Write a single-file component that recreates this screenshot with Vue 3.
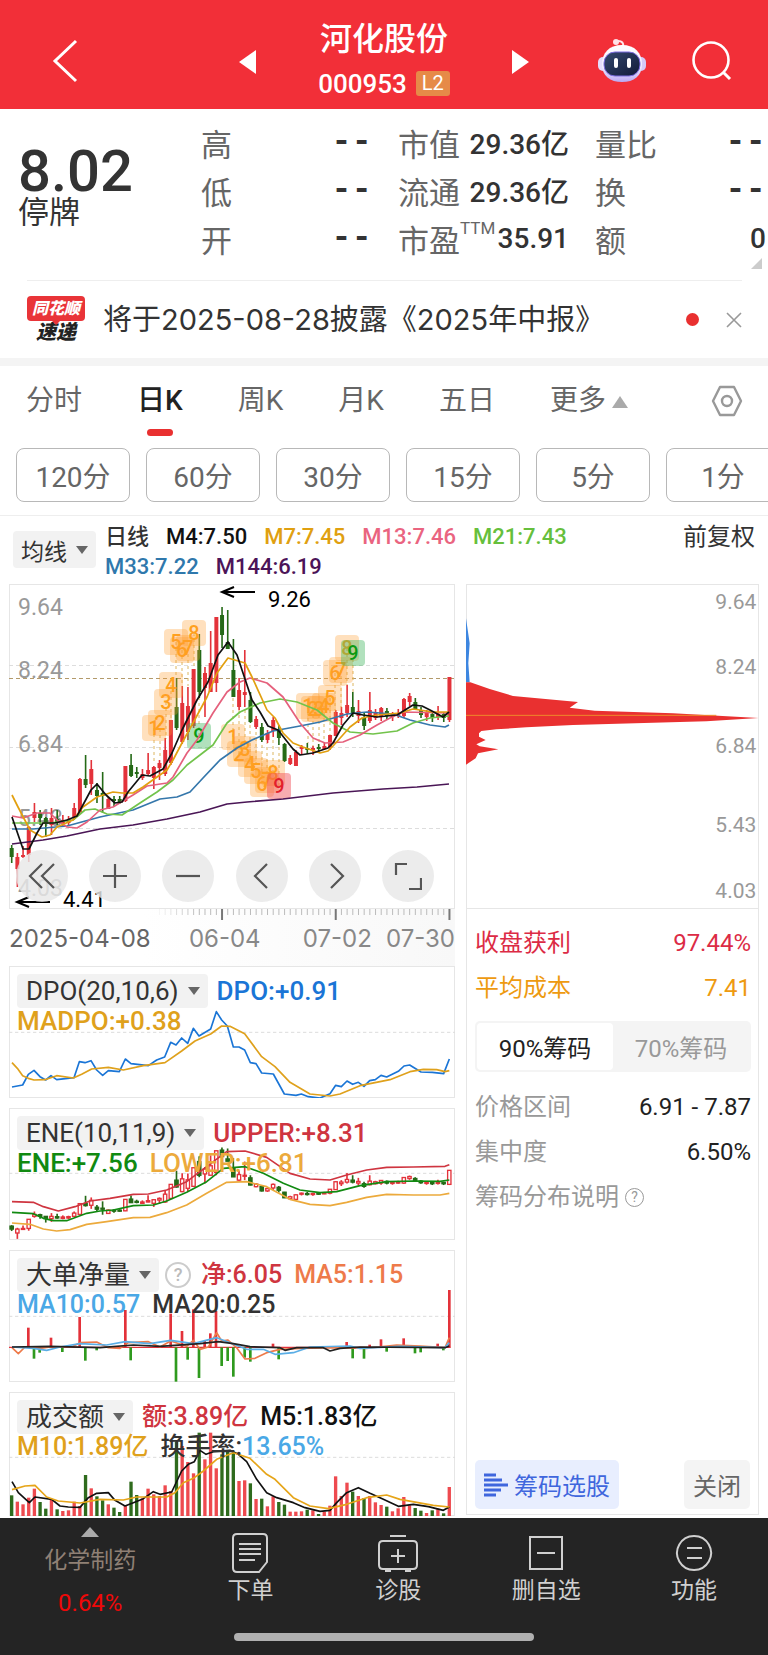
<template>
  <div class="page">
    <header class="topbar">
      <button class="icon-btn back" aria-label="返回">
        <svg width="26" height="44" viewBox="0 0 26 44"><path d="M24 2 3 22l21 20" fill="none" stroke="#fff" stroke-width="3" /></svg>
      </button>
      <div class="switcher">
        <button class="icon-btn" aria-label="上一只">
          <svg width="17" height="24" viewBox="0 0 17 24"><path d="M17 0v24L0 12z" fill="#fff" /></svg>
        </button>
        <div class="stock">
          <h1>河化股份</h1>
          <div class="code">000953<span class="level">L2</span></div>
        </div>
        <button class="icon-btn" aria-label="下一只">
          <svg width="17" height="24" viewBox="0 0 17 24"><path d="M0 0v24l17-12z" fill="#fff" /></svg>
        </button>
      </div>
      <div class="top-actions">
        <button class="icon-btn" aria-label="助手">
          <svg width="48" height="46" viewBox="0 0 48 46">
            <defs>
              <linearGradient id="shell" x1="0" y1="0" x2="0" y2="1">
                <stop offset="0" stop-color="#fff" />
                <stop offset=".6" stop-color="#f1ecff" />
                <stop offset="1" stop-color="#b9a8f2" />
              </linearGradient>
              <linearGradient id="visor" x1="0" y1="0" x2="1" y2="1">
                <stop offset="0" stop-color="#34486e" />
                <stop offset="1" stop-color="#121a38" />
              </linearGradient>
            </defs>
            <path d="M25 9c1-4-1-6-5-6" fill="none" stroke="#ffe6ea" stroke-width="2" />
            <circle cx="18" cy="4" r="3" fill="#ffe0e6" />
            <rect x="0" y="19" width="10" height="14" rx="5" fill="#e4dcfb" />
            <rect x="38" y="19" width="10" height="14" rx="5" fill="#d5caf8" />
            <path d="M24 7c13 0 20 8 20 19 0 12-8 18-20 18S4 38 4 26C4 15 11 7 24 7z" fill="url(#shell)" />
            <rect x="6" y="14" width="36" height="24" rx="11" fill="url(#visor)" stroke="#7b6ce0" />
            <rect x="16" y="20" width="4" height="10" rx="2" fill="#fff" />
            <rect x="29" y="20" width="4" height="10" rx="2" fill="#fff" />
          </svg>
        </button>
        <button class="icon-btn" aria-label="搜索">
          <svg width="40" height="40" viewBox="0 0 40 40"><circle cx="19" cy="19" r="17.5" fill="none" stroke="#fff" stroke-width="2.6" /><path d="m31 31 7 7" stroke="#fff" stroke-width="3" /></svg>
        </button>
      </div>
    </header>

    <section class="quote">
      <div class="price">
        <strong>8.02</strong>
        <span>停牌</span>
      </div>
      <dl v-for="(col, i) in quotes" :key="i">
        <div v-for="q in col" :key="q.label">
          <dt>{{ q.label }}<sup v-if="q.sup">{{ q.sup }}</sup></dt>
          <dd :class="{ dash: q.value === '--' }">{{ q.value }}</dd>
        </div>
      </dl>
      <span class="corner"></span>
    </section>

    <section class="notice">
      <div class="logo"><span class="bubble">同花顺</span><span class="logo-sub">速递</span></div>
      <a href="#">将于2025-08-28披露《2025年中报》</a>
      <span class="dot"></span>
      <button class="icon-btn" aria-label="关闭提醒">
        <svg width="16" height="18" viewBox="0 0 16 18"><path d="m1 2 14 14M15 2 1 16" stroke="#999" stroke-width="1.6" /></svg>
      </button>
    </section>

    <nav class="tabs">
      <button v-for="t in tabs" :key="t" :class="{ active: t === tab }" @click="tab = t">{{ t }}</button>
      <button class="more">更多<i class="tri-up"></i></button>
      <button class="icon-btn setting" aria-label="设置">
        <svg width="32" height="32" viewBox="0 0 32 32" fill="none" stroke="#999" stroke-width="2.4"><path d="M9 2h14l7 14-7 14H9L2 16z" stroke-linejoin="round" /><circle cx="16" cy="16" r="5" /></svg>
      </button>
    </nav>

    <div class="periods">
      <button v-for="p in periods" :key="p">{{ p }}</button>
    </div>

    <section class="averages">
      <button class="chip">均线<i class="caret"></i></button>
      <p>
        <span v-for="m in averages" :key="m.text" :style="{ color: m.color }">{{ m.text }}</span>
      </p>
      <button class="adjust">前复权</button>
    </section>

    <main class="board">
      <div class="charts">
        <div class="panel">
          <svg class="canvas kline" viewBox="0 0 446 325">
            <g class="grid">
              <path d="M0 81.500H446M0 163.500H446M0 244.500H446" />
              <path class="last" d="M0 94.500H446" />
            </g>
            <g class="axis">
              <text v-for="l in priceAxis" :key="l.t" x="9" :y="l.y">{{ l.t }}</text>
            </g>
            <g class="guides">
              <path v-for="(m, i) in markers" :key="i" :d="`M${m.x} ${m.y}V${m.to}`" />
            </g>
            <g v-for="(c, i) in candles" :key="i" :fill="c[4] ? '#e3323a' : '#256a17'">
              <rect :x="cx(i) - 0.8" :y="c[0]" width="1.6" :height="c[1] - c[0]" />
              <rect :x="cx(i) - 2" :y="c[2]" width="4" :height="c[3] - c[2]" />
            </g>
            <g v-for="(m, i) in markers" :key="'m' + i" class="marker" :class="m.kind">
              <rect :x="m.x - 12" :y="m.y - 13" width="24" height="26" rx="4" />
              <text :x="m.x" :y="m.y + 7">{{ m.n }}</text>
            </g>
            <polyline v-for="l in maLines" :key="l.color" :points="l.points" :stroke="l.color" class="line" />
            <g class="extreme">
              <path d="M246 8H214m11-5-12 5 12 5M41 318H9m11-5-12 5 12 5" />
              <text x="259" y="23">9.26</text>
              <text x="54" y="323">4.41</text>
            </g>
          </svg>
          <div class="tools">
            <button v-for="t in tools" :key="t.name" :aria-label="t.name">
              <svg width="28" height="28" viewBox="0 0 28 28"><path :d="t.d" fill="none" stroke="#555" stroke-width="2.200" /></svg>
            </button>
          </div>
        </div>

        <div class="timeline">
          <svg class="canvas" viewBox="0 0 446 12">
            <path v-for="i in 52" :key="i" :d="`M${cx(i + 25)} 0V${[12, 32, 52].includes(i) ? 11 : 6}`" :stroke="[12, 32, 52].includes(i) ? '#777' : '#bbb'" :stroke-width="[12, 32, 52].includes(i) ? 2 : 1" :opacity="Math.min(1, i / 8)" />
          </svg>
          <div class="dates"><b>2025-04-08</b><span>06-04</span><span>07-02</span><span>07-30</span></div>
        </div>

        <div class="panel">
          <svg class="canvas" viewBox="27 33 1338 396">
            <path class="mid" d="M27 232H1365" />
            <polyline class="wide" stroke="#1a75d6" points="36,396 68,390 85,358 102,346 120,365 137,375 153,362 170,374 222,368 238,320 255,323 273,317 290,345 308,361 325,347 358,350 376,312 393,326 445,332 470,315 494,306 512,262 528,270 545,249 563,265 580,220 597,243 632,222 649,170 665,195 682,213 700,276 717,276 734,285 751,323 768,326 785,354 820,357 853,417 888,421 904,417 925,425 960,429 990,416 1007,391 1024,395 1041,378 1058,388 1075,382 1092,394 1109,377 1126,374 1143,361 1160,366 1195,349 1212,333 1229,330 1263,351 1297,352 1331,356 1348,312" />
            <polyline class="wide" stroke="#dfa11c" points="36,323 52,340 68,362 85,370 102,375 135,374 170,362 220,369 245,358 275,342 325,337 370,345 430,332 495,323 545,288 585,258 632,237 665,213 690,214 734,236 785,305 825,335 870,382 930,417 990,423 1020,417 1080,392 1170,374 1230,350 1270,343 1310,344 1335,350 1348,347" />
          </svg>
          <div class="legend large">
            <div><button class="chip">DPO(20,10,6)<i class="caret"></i></button><span class="blue">DPO:+0.91</span></div>
            <div><span class="amber">MADPO:+0.38</span></div>
          </div>
        </div>

        <div class="panel">
          <svg class="canvas" viewBox="27 459 1338 396">
            <path class="mid" d="M27 655H1365" />
            <g v-for="(c, i) in candles" :key="i" :stroke="c[4] ? '#e3323a' : '#256a17'" :fill="c[4] ? '#fff' : '#256a17'">
              <path :d="`M${ex(i)} ${ey(c[0])}V${ey(c[1])}`" stroke-width="5" />
              <rect :x="ex(i) - 5" :y="ey(c[2])" width="10" :height="Math.max(ey(c[3]) - ey(c[2]), 3)" stroke-width="4" />
            </g>
            <polyline class="wide" stroke="#cf3540" points="36,740 100,742 130,755 175,768 225,755 270,738 330,730 400,718 445,717 500,705 560,680 620,635 680,590 735,588 800,607 870,655 930,672 990,675 1040,660 1100,645 1160,637 1240,636 1335,634 1348,629" />
            <polyline class="wide" stroke="#118a11" points="36,772 100,776 130,790 160,797 200,797 260,775 300,768 340,765 400,752 460,750 500,738 560,712 620,680 670,640 735,635 790,655 850,685 900,705 960,713 1010,710 1080,692 1160,680 1240,678 1320,679 1348,675" />
            <polyline class="wide" stroke="#ecaa3c" points="36,804 90,808 130,822 170,828 210,824 260,808 320,800 400,788 450,787 500,773 560,750 620,715 680,682 740,680 800,695 870,733 930,748 990,752 1040,742 1100,727 1160,718 1240,720 1320,720 1348,715" />
          </svg>
          <div class="legend large">
            <div><button class="chip">ENE(10,11,9)<i class="caret"></i></button><span class="red">UPPER:+8.31</span></div>
            <div><span class="green">ENE:+7.56</span><span class="orange">LOWER:+6.81</span></div>
          </div>
        </div>

        <div class="panel">
          <svg class="canvas" viewBox="27 27 1338 396">
            <path class="mid" d="M27 226H1365" />
            <path d="M27 319H1352" stroke="#e3323a" stroke-width="4" />
            <path v-for="f in flows" :key="f[0]" :d="`M${f[0]} 319V${f[1]}`" :stroke="f[1] < 319 ? '#e3323a' : '#2f9a1e'" stroke-width="8" />
            <polyline class="wide" stroke="#ee7a4a" points="36,320 55,338 75,318 120,322 150,318 215,318 240,305 290,303 325,320 360,322 385,305 445,302 480,318 512,300 560,316 580,298 600,325 625,318 650,275 665,300 683,297 710,320 735,354 765,352 800,335 840,325 900,322 1000,320 1100,322 1190,312 1260,315 1335,320 1348,290" />
            <polyline class="wide" stroke="#5aaee6" points="36,318 100,322 140,328 180,318 240,308 320,312 376,302 450,308 512,298 580,308 650,290 690,305 740,325 790,325 825,340 880,335 930,318 1050,315 1080,322 1200,316 1335,320 1348,305" />
            <polyline class="wide" stroke="#222" points="36,318 150,316 300,320 400,312 480,316 600,308 655,302 700,308 750,317 840,320 855,328 890,320 970,320 990,330 1020,322 1080,318 1335,320 1348,315" />
          </svg>
          <div class="legend">
            <div>
              <button class="chip">大单净量<i class="caret"></i></button>
              <button class="help" aria-label="说明">?</button>
              <span class="red">净:6.05</span><span class="coral">MA5:1.15</span>
            </div>
            <div><span class="sky">MA10:0.57</span><span>MA20:0.25</span></div>
          </div>
        </div>

        <div class="panel last-panel">
          <svg class="canvas" viewBox="27 453 1338 372">
            <path class="mid" d="M27 649H1365" />
            <rect v-for="(v, i) in volumes" :key="i" :x="ex(i) - 5" :y="Math.abs(v)" width="10" :height="834 - Math.abs(v)" :fill="v > 0 ? '#ee4a4f' : '#2f6b1d'" />
            <polyline class="wide" stroke="#111" points="36,722 55,755 88,785 105,768 155,775 180,795 205,798 240,799 265,770 290,757 325,755 345,778 375,795 400,785 430,773 460,752 480,760 515,753 545,690 565,670 583,662 600,628 618,640 640,632 690,628 715,640 740,662 770,715 800,755 830,770 880,785 915,800 960,811 990,808 1010,785 1040,755 1075,740 1110,757 1150,775 1195,796 1240,790 1285,797 1330,808 1348,798" />
            <polyline class="wide" stroke="#e6a519" points="36,746 75,735 105,733 140,768 175,780 240,786 300,775 370,777 410,768 500,768 525,755 550,725 580,712 610,690 650,655 700,635 750,652 800,700 825,715 880,770 930,795 985,803 1040,790 1100,770 1160,762 1200,775 1300,793 1348,798" />
          </svg>
          <div class="legend">
            <div><button class="chip">成交额<i class="caret"></i></button><span class="red">额:3.89亿</span><span class="black">M5:1.83亿</span></div>
            <div><span class="amber">M10:1.89亿</span><span>换手率:<em>13.65%</em></span></div>
          </div>
        </div>
      </div>

      <aside class="chips">
        <svg class="canvas" viewBox="79 222 879 972">
          <path d="M79 325 90 400 86 460 90 517H79z" fill="#3d86e0" />
          <path d="M79 517H92L150 537 220 558 415 576 390 593 465 602 700 610 957 624 800 634 400 645 260 652 170 658 125 663 118 670V680L138 690 110 703 120 709 176 718 115 730 108 745 79 764z" fill="#e93030" />
          <path d="M79 616H830" stroke="#ee8a2a" stroke-width="3" />
          <text v-for="l in chipAxis" :key="l.t" x="950" :y="l.y">{{ l.t }}</text>
        </svg>
        <div class="stats">
          <p class="crimson"><span>收盘获利</span><b>97.44%</b></p>
          <p class="gold"><span>平均成本</span><b>7.41</b></p>
          <div class="segment">
            <button :class="{ on: range === 90 }" @click="range = 90">90%筹码</button>
            <button :class="{ on: range === 70 }" @click="range = 70">70%筹码</button>
          </div>
          <p><span>价格区间</span><b>6.91 - 7.87</b></p>
          <p><span>集中度</span><b>6.50%</b></p>
          <p><span>筹码分布说明 <i class="hint">?</i></span></p>
        </div>
        <div class="chip-actions">
          <button class="pick">
            <svg width="24" height="24" viewBox="0 0 24 24"><path d="M0 2h12M0 7h18M0 12h24M0 17h17M0 22h12" stroke="#3f66dd" stroke-width="3" /></svg>筹码选股
          </button>
          <button class="close">关闭</button>
        </div>
      </aside>
    </main>

    <footer class="dock">
      <div class="dock-items">
        <a href="#" class="sector"><i class="tri-up"></i><span>化学制药</span><b>0.64%</b></a>
        <a v-for="d in dock" :key="d.name" href="#">
          <svg width="42" height="40" viewBox="0 0 42 40" fill="none" stroke="#d0d0d0" stroke-width="2"><path :d="d.d" /></svg>
          <span>{{ d.name }}</span>
        </a>
      </div>
      <div class="home-bar"></div>
    </footer>
  </div>
</template>

<script setup>
import { ref } from 'vue';

const tab = ref('日K');
const range = ref(90);

const quotes = [
  [{ label: '高', value: '--' }, { label: '低', value: '--' }, { label: '开', value: '--' }],
  [{ label: '市值', value: '29.36亿' }, { label: '流通', value: '29.36亿' }, { label: '市盈', sup: 'TTM', value: '35.91' }],
  [{ label: '量比', value: '--' }, { label: '换', value: '--' }, { label: '额', value: '0' }]
];

const tabs = ['分时', '日K', '周K', '月K', '五日'];
const periods = ['120分', '60分', '30分', '15分', '5分', '1分'];

const averages = [
  { text: '日线', color: '#333' },
  { text: 'M4:7.50', color: '#111' },
  { text: 'M7:7.45', color: '#e0a010' },
  { text: 'M13:7.46', color: '#ea6480' },
  { text: 'M21:7.43', color: '#66bf3c' },
  { text: 'M33:7.22', color: '#2f78ac' },
  { text: 'M144:6.19', color: '#4c1458' }
];

const priceAxis = [
  { t: '9.64', y: 31 }, { t: '8.24', y: 94 }, { t: '6.84', y: 168 }, { t: '5.43', y: 242 }, { t: '4.03', y: 312 }
];
const chipAxis = [
  { t: '9.64', y: 297 }, { t: '8.24', y: 492 }, { t: '6.84', y: 729 }, { t: '5.43', y: 966 }, { t: '4.03', y: 1163 }
];

// candle centre on the k-line canvas, and the same on the denser sub-charts
const cx = (i) => 2.7 + i * 5.685;
const ex = (i) => 35 + i * 17.05;
const ey = (y) => 555 + y * 0.979;

// [high, low, body top, body bottom, rising]
const candles = [
  [261, 279, 264, 273, 0], [269, 303, 273, 285, 1], [262, 274, 271, 273, 1], [242, 278, 243, 271, 1],
  [219, 238, 228, 234, 1], [226, 241, 229, 234, 0], [233, 253, 234, 240, 0], [224, 251, 234, 241, 1],
  [226, 241, 235, 239, 0], [231, 243, 236, 240, 1], [232, 242, 235, 239, 1], [219, 236, 224, 234, 1],
  [194, 230, 195, 228, 1], [171, 204, 195, 201, 0], [176, 211, 185, 200, 1], [199, 219, 206, 212, 0],
  [188, 229, 209, 212, 0], [213, 225, 215, 225, 1], [212, 223, 215, 217, 0], [212, 220, 215, 218, 0],
  [182, 218, 182, 217, 1], [170, 193, 181, 192, 0], [183, 194, 188, 190, 0], [185, 196, 190, 194, 1],
  [169, 191, 186, 190, 1], [182, 205, 183, 194, 1], [176, 196, 179, 184, 1], [154, 192, 166, 190, 1],
  [136, 181, 136, 179, 1], [94, 146, 123, 144, 0], [102, 160, 119, 158, 1], [103, 156, 122, 148, 1],
  [85, 144, 85, 142, 1], [50, 114, 66, 108, 0], [83, 133, 89, 104, 1], [47, 108, 79, 108, 1],
  [33, 108, 33, 99, 1], [23, 64, 31, 51, 0], [26, 65, 58, 65, 0], [55, 113, 86, 113, 0],
  [94, 126, 106, 123, 1], [66, 123, 108, 111, 1], [108, 139, 116, 138, 0], [132, 145, 135, 143, 1],
  [139, 158, 143, 156, 0], [146, 159, 149, 156, 1], [133, 153, 136, 147, 1], [141, 161, 145, 154, 0],
  [159, 178, 160, 177, 0], [171, 181, 174, 180, 1], [166, 182, 168, 182, 1], [161, 170, 163, 165, 1],
  [159, 170, 164, 166, 0], [162, 171, 164, 166, 1], [160, 168, 163, 165, 0], [159, 166, 162, 165, 1],
  [151, 166, 151, 163, 1], [126, 152, 128, 152, 1], [123, 141, 129, 134, 1], [101, 133, 121, 129, 1],
  [108, 133, 123, 129, 0], [116, 139, 127, 132, 1], [128, 146, 134, 142, 0], [108, 139, 126, 137, 1],
  [125, 136, 128, 134, 1], [123, 137, 124, 132, 1], [124, 136, 127, 132, 0], [128, 137, 130, 133, 1],
  [125, 134, 129, 132, 1], [114, 134, 115, 132, 1], [109, 122, 112, 118, 1], [114, 126, 118, 125, 0],
  [123, 134, 126, 131, 0], [126, 137, 129, 133, 1], [127, 138, 130, 134, 0], [122, 136, 130, 133, 1],
  [128, 138, 130, 134, 0], [93, 138, 93, 136, 1]
];

const maLines = [
  { color: '#4a1656', points: '3,260 34,256 58,252 91,245 124,241 158,235 191,228 218,220 238,218 274,215 324,209 374,205 408,203 440,200' },
  { color: '#3577ab', points: '3,245 24,245 58,242 91,233 124,226 151,215 168,213 181,208 194,194 211,176 228,164 243,156 264,147 291,142 311,138 338,130 358,128 384,130 401,136 421,141 436,143 440,141' },
  { color: '#72c34b', points: '3,239 41,239 64,236 76,226 86,225 98,230 113,231 131,219 148,208 164,196 178,181 191,171 204,161 218,139 231,128 251,119 271,115 288,118 308,126 324,139 341,148 364,150 388,147 404,139 421,134 440,132' },
  { color: '#e5607c', points: '3,232 14,234 28,229 41,229 48,236 58,243 68,244 78,238 91,226 104,223 124,211 138,202 158,199 164,193 178,169 188,156 204,129 218,108 231,98 241,94 258,99 274,113 291,139 304,154 316,159 334,158 351,151 368,141 381,134 394,128 440,129' },
  { color: '#e2a010', points: '3,211 9,223 21,246 33,253 41,251 48,243 64,236 74,223 88,213 104,208 113,209 124,209 134,203 148,193 158,186 164,176 173,159 184,139 198,113 208,89 219,74 236,79 243,93 258,126 266,134 274,149 284,159 294,163 311,169 319,167 324,162 341,143 353,134 368,131 391,129 404,125 424,128 440,128' },
  { color: '#111', points: '3,233 14,265 20,265 28,249 34,239 46,239 58,236 68,232 82,206 88,200 97,211 106,219 113,218 119,208 133,191 141,192 154,185 163,169 173,146 188,116 199,98 209,71 219,58 228,71 243,116 251,128 259,142 269,146 284,165 291,171 304,169 319,164 324,159 334,141 344,129 354,131 368,133 388,131 396,126 404,121 413,122 421,126 434,133 440,128' }
];

// nine-turn counts; "to" is where the dotted guide meets its candle
const markers = [
  { n: 1, x: 145, y: 144, to: 180 }, { n: 2, x: 151, y: 139, to: 175 }, { n: 3, x: 157, y: 118, to: 155 },
  { n: 4, x: 162, y: 101, to: 135 }, { n: 5, x: 167, y: 58, to: 94 }, { n: 6, x: 173, y: 66, to: 102 },
  { n: 7, x: 179, y: 64, to: 102 }, { n: 8, x: 185, y: 49, to: 85 }, { n: 9, x: 190, y: 152, to: 114, kind: 'sell' },
  { n: 1, x: 224, y: 153, to: 113 }, { n: 2, x: 230, y: 170, to: 126 }, { n: 3, x: 236, y: 165, to: 123 },
  { n: 4, x: 241, y: 180, to: 139 }, { n: 5, x: 247, y: 187, to: 145 }, { n: 6, x: 253, y: 200, to: 158 },
  { n: 7, x: 258, y: 196, to: 159 }, { n: 8, x: 264, y: 189, to: 153 }, { n: 9, x: 270, y: 202, to: 161, kind: 'buy' },
  { n: 1, x: 299, y: 122, to: 159 }, { n: 2, x: 304, y: 125, to: 162 }, { n: 3, x: 310, y: 125, to: 160 },
  { n: 4, x: 315, y: 122, to: 159 }, { n: 5, x: 321, y: 114, to: 151 }, { n: 6, x: 326, y: 89, to: 126 },
  { n: 7, x: 332, y: 86, to: 123 }, { n: 8, x: 338, y: 64, to: 101 }, { n: 9, x: 344, y: 69, to: 108, kind: 'sell' }
];

const tools = [
  { name: '更早', d: 'M14 2 2 14l12 12M26 2 14 14l12 12' },
  { name: '放大', d: 'M14 2v24M2 14h24' },
  { name: '缩小', d: 'M2 14h24' },
  { name: '左移', d: 'M19 2 7 14l12 12' },
  { name: '右移', d: 'M10 2l12 12-12 12' },
  { name: '全屏', d: 'M2 13V2h11M27 16v11H15' }
];

const flows = [
  [85, 260], [153, 290], [239, 228], [376, 207], [512, 218], [546, 270], [580, 205], [614, 300], [631, 277],
  [648, 210], [819, 308], [1040, 303], [1109, 311], [1143, 295], [1211, 292], [1313, 308], [1348, 147],
  [102, 353], [119, 335], [187, 333], [256, 359], [290, 328], [392, 358], [528, 422], [563, 356], [597, 411],
  [665, 375], [683, 360], [700, 407], [734, 350], [751, 362], [836, 355], [1058, 352], [1092, 353],
  [1160, 332], [1245, 337], [1262, 334], [1330, 328]
];

// bar tops, negative on falling days
const volumes = [
  -763, 782, 790, 770, 743, -783, -803, 775, -805, 810, 808, 782, 795, -702, 742, -766, -778, 790, -800, -813,
  793, -722, -762, 772, 743, 760, 765, 733, 750, -602, 615, 663, 697, -575, 655, 575, 682, -640, -632, -635,
  720, 718, -727, 774, -773, 796, 766, -783, -791, 812, 812, 811, -806, 808, -819, 812, 794, 706, 765, 725,
  -752, 765, -771, 765, 784, 792, -797, 811, 802, 768, 793, -801, -809, 816, -808, 803, -817, 738
];

const dock = [
  { name: '下单', d: 'M8 1h26q4 0 4 4v24l-8 10H8q-4 0-4-4V5q0-4 4-4zM10 11h22M10 16h22M10 21h22M10 27h16' },
  { name: '诊股', d: 'M6 8h30q4 0 4 4v20q0 4-4 4H6q-4 0-4-4V12q0-4 4-4zM13 3h16M21 16v14M14 23h14M8 38h6M28 38h6' },
  { name: '删自选', d: 'M5 4h32v32H5zM12 20h18' },
  { name: '功能', d: 'M21 3a17 17 0 1 0 .1 0zM14 15h15M14 25h15' }
];
</script>

<style>
body { margin: 0; background: #fff; }
</style>

<style scoped>
.page {
  min-height: 100vh;
  overflow: hidden;
  display: flex;
  flex-direction: column;
  font-family: Roboto, "Noto Sans CJK SC", sans-serif;
  color: #333;
  background: #fff;
}
button { padding: 0; border: 0; background: none; font: inherit; color: inherit; white-space: nowrap; cursor: pointer; }
a { color: inherit; text-decoration: none; }
p, dl, dd, h1 { margin: 0; }
i, em { font-style: normal; }
svg { display: block; }
.icon-btn { display: flex; }

.topbar {
  height: 109px;
  display: grid;
  grid-template-columns: 1fr auto 1fr;
  align-items: center;
  background: #f22f38;
  color: #fff;
}
.back { margin-left: 52px; padding-top: 12px; }
.switcher { display: flex; align-items: center; gap: 62px; }
.switcher > button { padding-top: 14px; }
.stock { text-align: center; padding-top: 12px; }
.stock h1 { font-size: 32px; line-height: 46px; font-weight: 500; }
.code { display: flex; align-items: center; justify-content: center; gap: 9px; font-size: 26px; line-height: 44px; font-weight: 500; }
.level { padding: 0 6px; border-radius: 3px; background: #e68a48; font-size: 20px; line-height: 25px; font-weight: 400; }
.top-actions { display: flex; align-items: center; justify-content: flex-end; gap: 46px; padding: 12px 36px 0 0; }

.quote {
  position: relative;
  display: flex;
  gap: 26px;
  padding: 9px 2px 18px 18px;
}
.price { flex: 1; display: flex; flex-direction: column; padding-top: 27px; }
.price strong { font-size: 58px; line-height: 52px; font-weight: 500; }
.price span { font-size: 31px; line-height: 32px; }
.quote dl { flex: 0 1 171px; }
.quote dl div { display: flex; justify-content: space-between; align-items: center; height: 48px; white-space: nowrap; }
.quote dt { font-size: 31px; color: #666; display: flex; }
.quote sup { font-size: 17px; line-height: 24px; }
.quote dd { font-size: 28px; font-weight: 500; }
.quote .dash { font-family: "Liberation Mono", monospace; font-size: 34px; font-weight: 700; }
.corner {
  position: absolute;
  right: 6px;
  bottom: 11px;
  border-left: 11px solid transparent;
  border-bottom: 11px solid #ccc;
}

.notice {
  display: flex;
  align-items: center;
  height: 77px;
  margin: 0 26px 0 27px;
  border-top: 1px solid #eee;
}
.logo { width: 58px; text-align: center; font-style: italic; font-weight: 900; }
.bubble {
  position: relative;
  display: block;
  border-radius: 4px;
  background: #e93438;
  color: #fff;
  font-size: 16px;
  line-height: 25px;
}
.bubble::after {
  content: "";
  position: absolute;
  left: 24px;
  top: 24px;
  border: 5px solid transparent;
  border-top-color: #e93438;
  border-bottom: 0;
}
.logo-sub { display: block; color: #222; font-size: 20px; line-height: 23px; }
.notice a { flex: 1; margin-left: 18px; padding-bottom: 6px; font-family: Inter, "Noto Sans CJK SC", sans-serif; font-size: 29px; white-space: nowrap; }
.dot { width: 13px; height: 13px; border-radius: 50%; background: #e93030; margin-right: 27px; }

.tabs {
  display: flex;
  align-items: center;
  gap: 55px;
  height: 70px;
  padding: 0 25px 0 26px;
  border-top: 8px solid #f4f4f4;
  font-size: 28px;
  color: #666;
}
.tabs button { position: relative; line-height: 70px; }
.tabs .active { color: #222; font-weight: 500; }
.tabs .active::after {
  content: "";
  position: absolute;
  left: 50%;
  bottom: 0;
  width: 26px;
  height: 7px;
  margin-left: -13px;
  border-radius: 4px;
  background: #e93030;
}
.tri-up {
  display: inline-block;
  border: 8px solid transparent;
  border-bottom: 12px solid #aaa;
  border-top: 0;
}
.more .tri-up { margin-left: 6px; vertical-align: 2px; }
.tabs .setting { margin-left: auto; }

.periods {
  display: flex;
  gap: 16px;
  padding: 12px 0 13px 16px;
  border-bottom: 1px solid #eee;
}
.periods button {
  flex: 0 0 114px;
  box-sizing: border-box;
  height: 54px;
  border: 1px solid #b8b8b8;
  border-radius: 8px;
  font-size: 28px;
  color: #666;
}

.averages { display: flex; align-items: flex-start; gap: 9px; height: 68px; padding: 0 13px; box-sizing: border-box; }
.chip {
  display: flex;
  align-items: center;
  gap: 9px;
  height: 34px;
  padding: 0 9px;
  border-radius: 4px;
  background: #f2f2f2;
  color: #333;
}
.averages .chip { height: 37px; margin-top: 15px; padding: 0 8px; font-size: 23px; }
.caret { border: 6px solid transparent; border-top: 8px solid #666; border-bottom: 0; }
.averages p { flex: 1; display: flex; flex-wrap: wrap; column-gap: 17px; padding-top: 6px; font-size: 22px; line-height: 30px; font-weight: 500; }
.adjust { font-size: 24px; line-height: 42px; }

.board { flex: 1; display: flex; gap: 11px; padding: 0 9px; }
.charts { flex: 446; min-width: 0; display: flex; flex-direction: column; }
.canvas { width: 100%; }
.panel { position: relative; margin-bottom: 10px; box-shadow: inset 0 0 0 1px #e6e6e6; }
.last-panel { margin-bottom: 0; }
.grid path { stroke: #ddd; stroke-dasharray: 4 3; }
.grid .last { stroke: #b39a6b; }
.mid { stroke: #ddd; stroke-width: 3; stroke-dasharray: 10 8; }
.axis text { font-size: 23px; fill: #999; }
.line { fill: none; stroke-width: 1.7; stroke-linejoin: round; }
.wide { fill: none; stroke-width: 5; stroke-linejoin: round; }
.guides path { stroke: #dcb660; stroke-dasharray: 3 3; }
.marker rect { fill: rgba(255, 160, 50, .32); }
.marker text { font-size: 20px; text-anchor: middle; fill: #ffa01e; font-weight: 500; }
.marker.sell rect { fill: rgba(60, 180, 90, .4); }
.marker.sell text { fill: #0b9a12; }
.marker.buy rect { fill: rgba(240, 70, 80, .45); }
.marker.buy text { fill: #e3202c; }
.extreme path { fill: none; stroke: #000; stroke-width: 2; }
.extreme text { font-size: 22px; fill: #000; }

.tools { position: absolute; left: 7px; right: 21px; bottom: 7px; display: flex; justify-content: space-between; }
.tools button {
  width: 52px;
  height: 52px;
  border-radius: 50%;
  display: flex;
  align-items: center;
  justify-content: center;
  background: rgba(232, 232, 232, .82);
}

.timeline { height: 57px; margin-top: -10px; background: linear-gradient(90deg, #fff 30%, #f8f8f8); }
.dates { display: flex; justify-content: space-between; font-family: Inter, sans-serif; font-size: 24px; line-height: 36px; color: #888; white-space: nowrap; }
.dates b { font-weight: 400; color: #666; margin-right: 18px; }
.dates span:nth-child(3) { margin: 0 -6px 0 22px; }

.legend { position: absolute; left: 8px; top: 8px; right: 0; font-size: 25px; line-height: 26px; font-weight: 500; white-space: nowrap; }
.legend div { display: flex; align-items: center; gap: 12px; }
.legend.large { font-size: 26px; }
.legend .chip { font-weight: 400; font-size: 26px; padding-right: 8px; margin-right: -3px; }
.help { width: 26px; height: 26px; box-sizing: border-box; border: 2px solid #ccc; border-radius: 50%; font-size: 18px; line-height: 20px; color: #bbb; margin: 0 -2px 0 -3px; }
.blue { color: #1a75d6; }
.amber { color: #dfa11c; }
.red { color: #cf3540; }
.green { color: #118a11; }
.orange { color: #ecaa3c; }
.coral { color: #ee7a4a; }
.sky, em { color: #4aa8e6; }
.black { color: #111; }

.chips { flex: 293; min-width: 0; display: flex; flex-direction: column; margin-bottom: 3px; box-shadow: inset 0 0 0 1px #e6e6e6; }
.chips > .canvas { border-bottom: 1px solid #e6e6e6; }
.chips text { font-size: 63px; fill: #999; text-anchor: end; }
.stats { padding: 12px 8px 0 9px; font-size: 24px; color: #999; white-space: nowrap; }
.stats p { display: flex; justify-content: space-between; line-height: 45px; }
.stats b { font-weight: 400; color: #222; }
.stats .crimson, .crimson b { color: #dc2b45; }
.stats .gold, .gold b { color: #ee9a10; }
.segment { display: flex; box-sizing: border-box; height: 51px; margin: 10px 0 13px; padding: 2px; border-radius: 5px; background: #f4f4f4; }
.segment button { flex: 1; border-radius: 4px; }
.segment .on { background: #fff; color: #222; }
.hint { display: inline-block; width: 17px; height: 17px; border: 1px solid #999; border-radius: 50%; font-size: 14px; line-height: 17px; text-align: center; vertical-align: 3px; }
.chip-actions { display: flex; justify-content: space-between; margin-top: auto; padding: 0 9px 6px; font-size: 24px; }
.chip-actions button { height: 49px; padding: 0 9px; border-radius: 5px; background: #f4f4f4; color: #666; }
.chip-actions .pick { display: flex; align-items: center; gap: 6px; background: #e8eefe; color: #3f66dd; }

.dock { background: #242424; color: #d0d0d0; padding-bottom: 14px; }
.dock-items { display: grid; grid-template-columns: 7fr 6fr 6fr 6fr 6fr; height: 115px; padding-left: 4px; }
.dock a { display: flex; flex-direction: column; align-items: center; padding-top: 15px; font-size: 23px; line-height: 36px; }
.dock .sector { padding-top: 9px; color: #8f8075; }
.sector span { padding: 6px 0; }
.sector b { font-weight: 400; font-size: 24px; color: #ee0808; }
.dock .tri-up { border-width: 0 9px 10px; }
.home-bar { width: 39%; height: 8px; margin: 0 auto; border-radius: 4px; background: #b0b0b0; }
</style>
